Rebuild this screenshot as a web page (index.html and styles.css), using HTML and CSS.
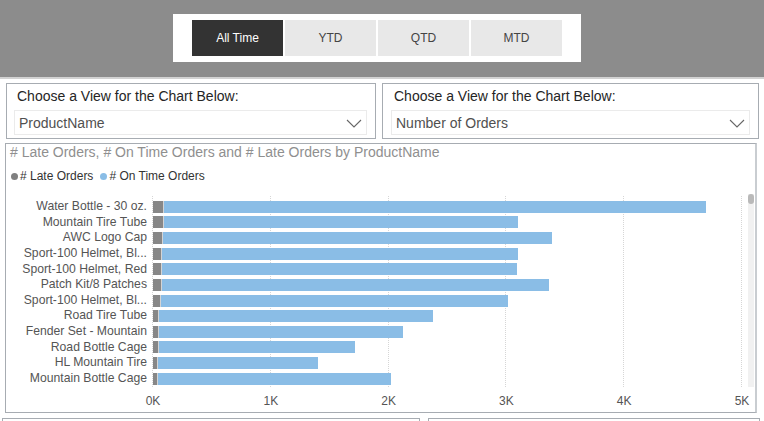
FILE: index.html
```html
<!DOCTYPE html>
<html lang="en">
<head>
    <meta charset="UTF-8">
    <meta name="viewport" content="width=device-width, initial-scale=1.0">
    <title>Orders Report</title>
    <link rel="stylesheet" href="styles.css">
</head>
<body>

    <div class="header">
        <div class="period-box">
            <button class="period active">All Time</button>
            <button class="period">YTD</button>
            <button class="period">QTD</button>
            <button class="period">MTD</button>
        </div>
    </div>

    <div class="slicers">
        <div class="slicer slicer-left">
            <div class="slicer-title">Choose a View for the Chart Below:</div>
            <div class="dropdown">
                <span>ProductName</span>
                <svg width="16" height="9" viewBox="0 0 16 9"><polyline points="1,1 8,8 15,1" fill="none" stroke="#666" stroke-width="1.1"/></svg>
            </div>
        </div>
        <div class="slicer slicer-right">
            <div class="slicer-title">Choose a View for the Chart Below:</div>
            <div class="dropdown">
                <span>Number of Orders</span>
                <svg width="16" height="9" viewBox="0 0 16 9"><polyline points="1,1 8,8 15,1" fill="none" stroke="#666" stroke-width="1.1"/></svg>
            </div>
        </div>
    </div>

    <div class="chart">
        <div class="chart-title"># Late Orders, # On Time Orders and # Late Orders by ProductName</div>
        <div class="legend">
            <span class="dot late"></span><span class="legend-text"># Late Orders</span>
            <span class="dot ontime"></span><span class="legend-text"># On Time Orders</span>
        </div>
        <div class="chart-body">
            <div class="labels" id="labels"></div>
            <div class="plot">
                <div class="grid">
                    <div></div><div></div><div></div><div></div><div></div>
                </div>
                <div class="bars" id="bars"></div>
            </div>
            <div class="scrollbar"><div class="thumb"></div></div>
        </div>
        <div class="axis">
            <span>0K</span><span>1K</span><span>2K</span><span>3K</span><span>4K</span><span>5K</span>
        </div>
    </div>

    <div class="bottom">
        <div class="bottom-left"></div>
        <div class="bottom-right"></div>
    </div>

    <script>
        // [producto, tarde, a tiempo]
        const datos = [
            ["Water Bottle - 30 oz.", 85, 4600],
            ["Mountain Tire Tube", 82, 3005],
            ["AWC Logo Cap", 77, 3299],
            ["Sport-100 Helmet, Black", 70, 3017],
            ["Sport-100 Helmet, Red", 68, 3010],
            ["Patch Kit/8 Patches", 68, 3282],
            ["Sport-100 Helmet, Blue", 60, 2942],
            ["Road Tire Tube", 40, 2332],
            ["Fender Set - Mountain", 40, 2077],
            ["Road Bottle Cage", 40, 1669],
            ["HL Mountain Tire", 36, 1359],
            ["Mountain Bottle Cage", 34, 1981]
        ];
        const escala = 589 / 5000;
        const maxLetras = 21;
        const labels = document.getElementById("labels");
        const bars = document.getElementById("bars");

        datos.forEach(([nombre, tarde, aTiempo]) => {
            // Recortar nombres largos como hace el visual
            const corto = nombre.length > maxLetras ? nombre.slice(0, 20) + "..." : nombre;
            const label = document.createElement("div");
            label.className = "label";
            label.textContent = corto;
            label.title = nombre;
            labels.appendChild(label);

            const row = document.createElement("div");
            row.className = "bar-row";
            row.innerHTML =
                `<span class="bar late" style="width:${(tarde * escala).toFixed(1)}px"></span>` +
                `<span class="bar ontime" style="width:${(aTiempo * escala).toFixed(1)}px"></span>`;
            bars.appendChild(row);
        });
    </script>

</body>
</html>
```

FILE: styles.css
```css
body {
    margin: 0;
    width: 764px;
    height: 421px;
    overflow: hidden;
    font-family: "Liberation Sans", Arial, sans-serif;
    background: white;
}
.header {
    height: 79px;
    background-color: #8c8c8c;
    border-bottom: 2px solid #d2d2d2;
    padding-left: 173px;
    padding-top: 14px;
    box-sizing: border-box;
}
.period-box {
    display: inline-flex;
    gap: 2px;
    background: white;
    padding: 6px 19px;
}
.period {
    width: 91px;
    height: 36px;
    border: none;
    background-color: #e8e8e8;
    color: #444;
    font-family: inherit;
    font-size: 12px;
    padding: 0;
}
.period.active {
    background-color: #333333;
    color: white;
}
.slicers {
    display: flex;
    gap: 6px;
    margin: 4px 0 0 6px;
}
.slicer {
    height: 56px;
    box-sizing: border-box;
    border: 1px solid #a7acb2;
    padding: 3px 8px 0;
}
.slicer-left {
    width: 370px;
    padding-left: 7px;
}
.slicer-right {
    width: 377px;
}
.slicer-title {
    font-size: 14px;
    line-height: 18px;
    color: #252525;
    padding-left: 3px;
}
.dropdown {
    margin-top: 5px;
    height: 25px;
    box-sizing: border-box;
    border: 1px solid #ebebeb;
    display: flex;
    align-items: center;
    justify-content: space-between;
    padding: 0 4px 0 4px;
    font-size: 14px;
    color: #505050;
}
.dropdown svg {
    margin-top: 1px;
}
.chart {
    margin: 4px 0 0 5px;
    width: 752px;
    height: 270px;
    box-sizing: border-box;
    border: 1px solid #a7acb2;
    border-right: 2px solid #c9cdd1;
}
.chart-title {
    font-size: 14px;
    line-height: 17px;
    color: #8f8f8f;
    padding-left: 4px;
}
.legend {
    display: flex;
    align-items: center;
    margin-top: 8px;
    height: 14px;
    padding-left: 5px;
    font-size: 12px;
    color: #333;
}
.dot {
    width: 7px;
    height: 7px;
    border-radius: 50%;
    margin-right: 2px;
}
.dot.late {
    background-color: #808080;
}
.dot.ontime {
    background-color: #8abde6;
    margin-left: 7px;
}
.chart-body {
    display: flex;
    margin-top: 15px;
    height: 188px;
}
.labels {
    width: 127px;
    padding-left: 14px;
    margin-right: 6px;
    padding-top: 1px;
}
.label {
    height: 15.64px;
    line-height: 15.64px;
    font-size: 12.2px;
    color: #555;
    text-align: right;
    white-space: nowrap;
}
.plot {
    width: 589px;
    display: grid;
}
.grid, .bars {
    grid-area: 1 / 1;
}
.grid {
    display: grid;
    grid-template-columns: repeat(5, 1fr);
    border-left: 1px dotted #d6d6d6;
    margin-left: -1px;
    margin-top: -2px;
}
.grid div {
    border-right: 1px dotted #d6d6d6;
}
.bars {
    padding-top: 1px;
}
.bar-row {
    height: 15.64px;
    display: flex;
    align-items: center;
}
.bar {
    height: 12px;
}
.bar.late {
    background-color: #878787;
    border-right: 1px solid #d4d4d4;
}
.bar.ontime {
    background-color: #8abde6;
}
.scrollbar {
    margin-left: 6px;
    margin-top: -4px;
    width: 6px;
    height: 193px;
    background-color: #f1f1f1;
}
.thumb {
    height: 10px;
    border-radius: 3px;
    background-color: #b9b9b9;
}
.axis {
    display: flex;
    justify-content: space-between;
    margin: 8px 0 0 147px;
    width: 589px;
    font-size: 12px;
    line-height: 14px;
    color: #555;
}
.axis span {
    width: 0;
    display: flex;
    justify-content: center;
}
.bottom {
    display: flex;
    gap: 8px;
    margin-top: 5px;
}
.bottom-left, .bottom-right {
    height: 20px;
    border: 1px solid #a7acb2;
}
.bottom-left {
    width: 416px;
    margin-left: 2px;
}
.bottom-right {
    width: 330px;
}
```
